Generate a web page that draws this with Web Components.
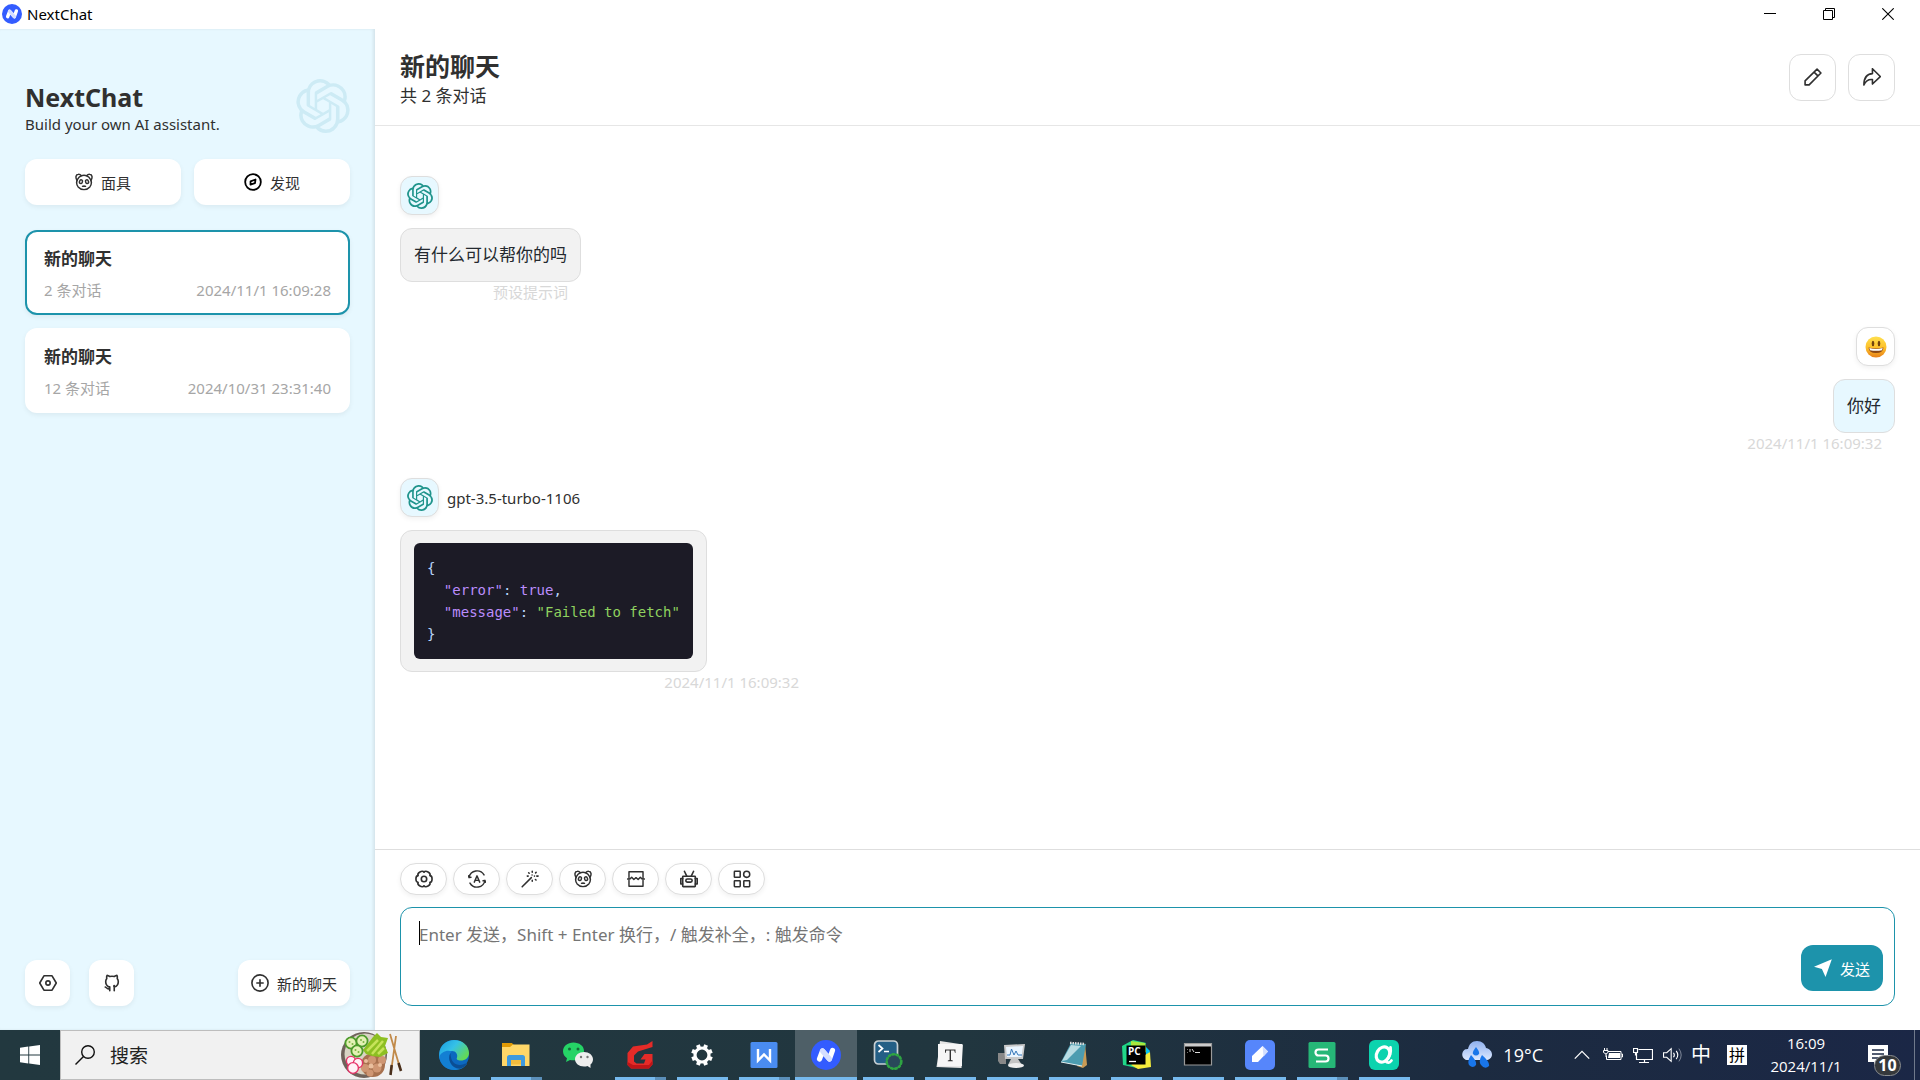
<!DOCTYPE html>
<html lang="zh-CN">
<head>
<meta charset="utf-8">
<title>NextChat</title>
<style>
  html, body {
    margin: 0;
    height: 100%;
  }
  body {
    --primary: #1d93ab;
    --second: #e7f8ff;
    --black: #303030;
    --line: #dedede;
    --card-shadow: 0 2px 5px rgba(0, 0, 0, .06);
    display: flex;
    flex-direction: column;
    overflow: hidden;
    background: #fff;
    color: var(--black);
    font-family: "Noto Sans", "Noto Sans CJK SC", sans-serif;
    font-size: 15px;
  }
</style>
</head>
<body>
<title-bar>NextChat</title-bar>
<chat-app></chat-app>
<task-bar></task-bar>

<script>
const OPENAI = 'M22.2819 9.8211a5.9847 5.9847 0 0 0-.5157-4.9108 6.0462 6.0462 0 0 0-6.5098-2.9A6.0651 6.0651 0 0 0 4.9807 4.1818a5.9847 5.9847 0 0 0-3.9977 2.9 6.0462 6.0462 0 0 0 .7427 7.0966 5.98 5.98 0 0 0 .511 4.9107 6.051 6.051 0 0 0 6.5146 2.9001A5.9847 5.9847 0 0 0 13.2599 24a6.0557 6.0557 0 0 0 5.7718-4.2058 5.9894 5.9894 0 0 0 3.9977-2.9001 6.0557 6.0557 0 0 0-.7475-7.0729zm-9.022 12.6081a4.4755 4.4755 0 0 1-2.8764-1.0408l.1419-.0804 4.7783-2.7582a.7948.7948 0 0 0 .3927-.6813v-6.7369l2.02 1.1686a.071.071 0 0 1 .038.052v5.5826a4.504 4.504 0 0 1-4.4945 4.4944zm-9.6607-4.1254a4.4708 4.4708 0 0 1-.5346-3.0137l.142.0852 4.783 2.7582a.7712.7712 0 0 0 .7806 0l5.8428-3.3685v2.3324a.0804.0804 0 0 1-.0332.0615L9.74 19.9502a4.4992 4.4992 0 0 1-6.1408-1.6464zM2.3408 7.8956a4.485 4.485 0 0 1 2.3655-1.9728V11.6a.7664.7664 0 0 0 .3879.6765l5.8144 3.3543-2.0201 1.1685a.0757.0757 0 0 1-.071 0l-4.8303-2.7865A4.504 4.504 0 0 1 2.3408 7.872zm16.5963 3.8558L13.1038 8.364 15.1192 7.2a.0757.0757 0 0 1 .071 0l4.8303 2.7913a4.4944 4.4944 0 0 1-.6765 8.1042v-5.6772a.79.79 0 0 0-.407-.667zm2.0107-3.0231l-.142-.0852-4.7735-2.7818a.7759.7759 0 0 0-.7854 0L9.409 9.2297V6.8974a.0662.0662 0 0 1 .0284-.0615l4.8303-2.7866a4.4992 4.4992 0 0 1 6.6802 4.66zM8.3065 12.863l-2.02-1.1638a.0804.0804 0 0 1-.038-.0567V6.0742a4.4992 4.4992 0 0 1 7.3757-3.4537l-.142.0805L8.704 5.459a.7948.7948 0 0 0-.3927.6813zm1.0976-2.3654l2.602-1.4998 2.6069 1.4998v2.9994l-2.5974 1.4997-2.6067-1.4997Z';

// [viewBox, markup]; line icons draw with currentColor
const line = (body, width = 1.6) =>
  `<g fill="none" stroke="currentColor" stroke-width="${width}" stroke-linecap="round" stroke-linejoin="round">${body}</g>`;

const ICONS = {
  openai: ['0 0 24 24', `<path fill="currentColor" d="${OPENAI}"/>`],
  next: ['0 0 30 30', `<circle cx="15" cy="15" r="15" fill="#335cff"/>
    <g fill="none" stroke-linecap="round" stroke-linejoin="round">
      <path d="M8.500 19 11.500 11 18.500 19 21.500 10.500" stroke="#fff" stroke-width="5.200"/>
      <path d="M11.500 11 18.500 19" stroke="#d5deff" stroke-width="5"/>
    </g>`],
  panda: ['0 0 20 20', line(`<path d="M4.500 4.800C7.500 1.800 12.500 1.800 15.500 4.800 18.500 8 19 12 16.500 15.500 13 19.500 7 19.500 3.500 15.500 1 12 1.500 8 4.500 4.800Z"/>
    <path d="M2.200 8C.2 5 1 1.500 3.600 1.400 5 1.300 6.300 2 7 3M17.800 8c2-3 1.200-6.500-1.400-6.600C15 1.300 13.700 2 13 3"/>
    <ellipse cx="6.600" cy="9.600" rx="1.600" ry="2.100" transform="rotate(20 6.600 9.600)"/><ellipse cx="13.400" cy="9.600" rx="1.600" ry="2.100" transform="rotate(-20 13.400 9.600)"/>
    <path d="M8.300 14.800Q10 13.800 11.700 14.800Z"/>`, 1.6)],
  compass: ['0 0 20 20', `<g color="#000">${line('<circle cx="10" cy="10" r="8.700"/><path d="M7.300 9.200 12.800 7.200 12.200 11.300 7.200 12.800Z"/>', 2)}</g>`],
  settings: ['0 0 20 20', line('<path d="M5.500 2h9L19.200 10l-4.700 8h-9L.8 10Z"/><circle cx="10" cy="10" r="2.400"/>', 1.8)],
  github: ['0 0 20 20', line('<path d="M7.500 18.500v-4C4.500 13.500 3 11.500 3 8.500 3 7 3.500 6 4.200 5 3.900 3.800 4 2.500 4.500 1.500c1.200.1 2 .6 3 1.300 1.600-.4 3.400-.4 5 0 1-.7 1.800-1.200 3-1.300.5 1 .6 2.300.3 3.500.7 1 1.200 2 1.200 3.500 0 3-1.500 5-4.500 6v4M7.500 16.500C5 17.500 4.200 15 2.500 14.500M7.500 14.200c-.7.800-.7 1.500 0 2.300M12.500 14.500q-.9-1.400 0-1.700"/>', 1.8)],
  plus: ['0 0 20 20', line('<circle cx="10" cy="10" r="9"/><path d="M10 6.500v7M6.500 10h7"/>', 1.8)],
  edit: ['0 0 20 20', line('<path d="M1.200 18.800v-4.500L14.500 1.200 18.800 5.500 5.700 18.800ZM11.200 4.600l4.200 4.200"/>', 1.8)],
  share: ['0 0 20 20', line('<path d="M10.500.8 19.200 9.500 10.500 17.800V12.800C6.500 12.300 3.200 14 1 18.800 1 10.500 4.500 6.500 10.500 6.200Z"/>', 1.8)],
  gear: ['0 0 20 20', line('<path d="M10 2.500C11.650-.4 18.150 3.350 16.500 6.250 19.800 6.250 19.800 13.750 16.500 13.750 18.150 16.650 11.650 20.400 10 17.500 8.350 20.400 1.850 16.650 3.500 13.750.2 13.750.2 6.250 3.500 6.250 1.850 3.350 8.350-.4 10 2.500Z"/><circle cx="10" cy="10" r="3"/>', 1.8)],
  auto: ['0 0 20 20', line('<path d="M1.200 8.200A9 9 0 0 1 17.800 5.500M18.800 11.800A9 9 0 0 1 2.200 14.500M.5 6.500 1.200 8.500 3.300 8M19.500 13.500 18.800 11.500 16.700 12M7 13.500 10 6.500 13 13.500M8 11.500h4"/>')],
  wand: ['0 0 20 20', line('<path d="M1.300 18.700 11.500 8.500M12.500 1.500v1M12.500 11.500v1M7 6.800h1M17.500 6.800h1.500M8.500 3l.6.600M16.200 3.200l.6-.6M16 10.500l.7.700M12.300 5.500v.1M15 6.800l-.1 0"/>', 1.7)],
  clip: ['0 0 20 20', line('<path d="M2.200 8.500V2h15.600v6.500M2.200 11.500v6.500h15.600v-6.500M.5 10h2.700l2-2 2.400 2.500 2.400-2 2.400 2 2.400-2.500 2 2h2.700"/>')],
  robot: ['0 0 20 20', line('<rect x="3" y="7" width="14" height="11.500" rx=".6"/><rect x="6.500" y="10" width="7" height="3.500" rx="1.700"/><path d="M3 9.500H.9v6h2.100M17 9.500h2.100v6h-2.100M7.500 6.800 5.300 2.200M12.500 6.800l2.200-4.600M5 1.500v.5M15 1.500V2"/>', 1.8)],
  grid: ['0 0 20 20', line('<rect x="1.500" y="1.500" width="6.500" height="6.500" rx=".6"/><circle cx="15.200" cy="4.800" r="3.400"/><rect x="1.500" y="12" width="6.500" height="6.500" rx=".6"/><rect x="12" y="12" width="6.500" height="6.500" rx=".6"/>', 1.7)],
  send: ['0 0 20 20', '<path fill="#fff" d="M19.800.2 0 8.500 8.800 11.200 12.800 20Z"/>'],
  smile: ['0 0 22 22', `<defs><linearGradient id="f" x2="0" y2="1"><stop stop-color="#ffe04d"/><stop offset=".55" stop-color="#fdbf2a"/><stop offset="1" stop-color="#e77f18"/></linearGradient></defs>
    <circle cx="11" cy="11" r="10.500" fill="url(#f)"/><ellipse cx="8" cy="7.500" rx="1.300" ry="2.800" fill="#70430f"/><ellipse cx="14" cy="7.500" rx="1.300" ry="2.800" fill="#70430f"/>
    <path d="M3.500 11.500Q11 13.500 18.500 11.500 18 17 11 17 4 17 3.500 11.500Z" fill="#8a4512"/><path d="M4.300 12.100Q11 14 17.700 12.100L17 14.200Q11 15.500 5 14.200Z" fill="#fff"/>`],
  minimize: ['0 0 12 12', '<path fill="#000" d="M0 5h12v1H0z"/>'],
  restore: ['0 0 12 12', '<path fill="none" stroke="#000" d="M.5 2.500h9v9h-9zM2.500 2.500v-2h9v9h-2"/>'],
  close: ['0 0 12 12', '<path fill="none" stroke="#000" stroke-width="1.100" d="M.3.300l11.400 11.400M11.700.300.300 11.700"/>'],
  windows: ['0 0 20 20', '<path fill="#fff" d="M0 2.800 8.300 1.600V9.500H0ZM9.200 1.500 20 0v9.500H9.200ZM0 10.400h8.300v8L0 17.300ZM9.200 10.400H20V20L9.200 18.500Z"/>'],
  search: ['0 0 20 20', '<g fill="none" stroke="#111" stroke-width="1.400"><circle cx="13" cy="7" r="6.300"/><path d="M8.500 11.500.5 19.500"/></g>'],
  salad: ['0 0 62 46', `<circle cx="23" cy="23" r="23" fill="#6f625a"/><circle cx="24" cy="22" r="20.500" fill="#d9d4c4"/>
    <circle cx="32" cy="33" r="12" fill="#a8714f"/><g fill="#cf9673"><circle cx="24" cy="36" r="4"/><circle cx="31" cy="28" r="4"/><circle cx="36" cy="36" r="4.500"/><circle cx="41" cy="28" r="4"/><circle cx="29" cy="41" r="3.500"/></g><g fill="#eabf9e"><circle cx="30" cy="34" r="2.500"/><circle cx="39" cy="33" r="2"/><circle cx="25" cy="29" r="2"/></g>
    <path d="M22 18 32 5 36 1 40 5 47 6 44 14 47 21 39 25 31 24 25 22Z" fill="#8dbf22"/><path d="M26 19 37 8M31 22l11-13M37 22l6-6" stroke="#c6e35a" stroke-width="2.500"/>
    <g stroke="#4d9a2a" stroke-width="1.800" fill="#e3f1b4"><circle cx="10" cy="11" r="5.600"/><circle cx="21" cy="9" r="5.600"/><circle cx="16" cy="19" r="5.600"/></g>
    <g fill="#7cb342"><circle cx="8.500" cy="10" r="1"/><circle cx="11.500" cy="12" r="1"/><circle cx="20" cy="8" r="1"/><circle cx="22.500" cy="10" r="1"/><circle cx="14.500" cy="18" r="1"/><circle cx="17.500" cy="20" r="1"/></g>
    <g stroke="#e63268" stroke-width="1.400" fill="#fff1f5"><circle cx="10" cy="29" r="4.600"/><circle cx="17" cy="31" r="4.600"/><circle cx="12" cy="36" r="5.400"/></g>
    <path d="M49 2 59 36M55 4 50 40" stroke="#c18a4a" stroke-width="1.800"/><path d="M57.500 31 60 39M50.700 33 49.500 43" stroke="#4a2f1c" stroke-width="2.600"/>`],
  edge: ['0 0 30 30', `<defs><linearGradient id="a" x2="1" y2=".6"><stop stop-color="#199ae0"/><stop offset=".5" stop-color="#35c1e8"/><stop offset="1" stop-color="#63d957"/></linearGradient></defs>
    <circle cx="15" cy="15" r="15" fill="#0c68bf"/><path d="M.3 13C1 5 8 0 15 0c9 0 15 6 15 13 0 5-4 7.500-8 7.500-3.500 0-5-1-4-3 1-3-1-6.500-5-6.500C7 11 1.500 13 .3 19Z" fill="url(#a)"/>
    <path d="M13 11.500C9 14 9 22 14 25c4 3 9 1.500 12.500-1.500 1-.7 1.500 0 1 1A15 15 0 0 1 15 30C7 30 1 24 .2 17 2 12 8 9.500 13 11.500Z" fill="#137fd3"/><path d="M11.500 13C8 19 12 29 21 28.700 24.500 27.500 26.500 26 27.500 24.500c.8-1.200 0-1.500-1-1-6 3-15 2-15-10.500Z" fill="#0b4e94"/>`],
  folder: ['0 0 30 30', '<path d="M1 3h10l2 2.500V9H1z" fill="#e09a05"/><path d="M1 7h8l3-2.500h16.500V26H1z" fill="#ffd768"/><path d="M6 26V17.500Q6 15 8.500 15h13Q24 15 24 17.500V26h-4v-6H10v6Z" fill="#3e9adf"/><path d="M10 20h10v4.500H10z" fill="#f3bd3d"/>'],
  wechat: ['0 0 30 30', '<path d="M10.500 2.500C4.500 2.500 0 6.300 0 11.200c0 3 1.500 5.300 4 7L3 22l4-2c5 1 14 .5 14-9 0-5-4.700-8.500-10.500-8.500Z" fill="#25d366"/><path d="M21 12c-5 0-9 3.200-9 7.300s4 7.200 9 7.200q2 0 3.500-.6L27.500 28v-3.500c1.600-1.300 2.500-3.100 2.500-5.200C30 15.200 26 12 21 12Z" fill="#eee"/><g fill="#17693a"><circle cx="6.500" cy="9" r="1.500"/><circle cx="15" cy="9" r="1.500"/></g><g fill="#777"><circle cx="18" cy="17" r="1.200"/><circle cx="24.500" cy="17" r="1.200"/></g>'],
  gtool: ['0 0 30 30', '<path d="M27.500 1v6L13 11.500 9 15.500v6l2.500 2h7.500l1.500-4h-5l4-5.500H27.500v10.500L24 28.500H6L2.500 25V13L8 6.500 22 4.500Z" fill="#e52b28"/><path d="M2.500 22v3L6 28.500h18l3.500-4v-4L24 25H8Z" fill="#bf1518"/>'],
  cog: ['0 0 30 30', '<g fill="none" stroke="#fff"><circle cx="15" cy="15" r="7" stroke-width="3.200"/><path d="M15 7.500V4.200M15 22.500v3.300M7.500 15H4.200M22.500 15h3.300M9.700 9.700 7.400 7.400M20.300 20.300l2.300 2.300M9.700 20.300l-2.300 2.300M20.300 9.700l2.300-2.300" stroke-width="4" transform="rotate(22.500 15 15)"/></g>'],
  wps: ['0 0 30 30', '<rect x="1.500" y="2" width="27" height="26" rx="1.500" fill="#4a8cf0"/><path d="M9 9v11.500l6-6 6 6V9" fill="none" stroke="#fff" stroke-width="2.400"/>'],
  shell: ['0 0 30 30', '<rect x="1.500" y="1" width="23" height="23" rx="4" fill="#245f86" stroke="#c8d0d4" stroke-width="1.700"/><path d="m5.500 5 4 3.500L5.500 12M11 11.500h5" fill="none" stroke="#fff" stroke-width="1.700"/><circle cx="21" cy="21.500" r="7.300" fill="#29485a" stroke="#2fa443" stroke-width="2.600" stroke-dasharray="3 1"/><circle cx="21" cy="21.500" r="7.300" fill="none" stroke="#2fa443" stroke-width="1.500"/>'],
  typora: ['0 0 30 30', '<path d="M5 1 28 4.500 26.500 28 1.500 27 4 10Z" fill="#e5e5e5"/><path d="M3 4h24v22H3z" fill="#f6f6f6"/><path d="M10 9.500h10.500v3.500h-.5l-.8-2.500H16V20l1.800.5v.7h-5v-.7l1.800-.5v-9.500h-3.300L10.500 13H10z" fill="#333"/>'],
  monitor: ['0 0 30 30', '<path d="M1 13h8v11H3L1 21Z" fill="#888"/><path d="M7 5 28 4 26 19H8Z" fill="#c9c9c9"/><path d="m9 7 17-1-1.500 11H10Z" fill="#eaf5ff"/><path d="M10 15h3l1.500-6L17 15l2-4 2 4h4" fill="none" stroke="#3577b8"/><path d="M14 19h7l4 6H11Z" fill="#c4c4c4"/><ellipse cx="19" cy="25.500" rx="8" ry="2.500" fill="#eee"/>'],
  notepad: ['0 0 30 30', '<path d="M26 3 28 25l-4 3-6-2Z" fill="#c99b55"/><path d="M12 3 27 4 23 26 2 22Z" fill="#4c9cb0"/><path d="M12 5 22 6 8 20l-5 1Z" fill="#b9dce3"/><path d="m11 3 15 1" stroke="#ddd" stroke-width="2.500" stroke-dasharray="1.500 1"/><path d="M2 22 23 26" stroke="#e4eff1"/>'],
  pycharm: ['0 0 30 30', '<path d="m1 6 11-6 13 3-9 25-14-3Z" fill="#21d789"/><path d="m10 1 14 2 2 9-16 3Z" fill="#a9e83d"/><path d="m25 7 4 4-4 10Z" fill="#07c3f2"/><path d="m24 15 5-3 1 15-13 2-7-4Z" fill="#f5ec3c"/><path d="M5.500 5.500h19v19h-19z"/><path d="M8 21.500h7" stroke="#fff" stroke-width="1.300"/><text x="7" y="15" fill="#fff" font-family="Open Sans" font-weight="700" font-size="10">PC</text>'],
  cmd: ['0 0 30 30', '<path d="M1.500 3.500h27v21.500h-27z" fill="#000" stroke="#9a9a9a" stroke-width="1.200"/><path d="M2 4h26v2.500H2z" fill="#ccc"/><path d="M4.500 9.500v.5M4.500 12v.5M7 9v3M9 9l2 3M12 12.500h5" stroke="#ddd" fill="none"/>'],
  pen: ['0 0 30 30', '<rect width="30" height="30" rx="5" fill="#5686fb"/><path d="m7 16 10.500-10L23 11.500 13 22H7Z" fill="#fff"/><path d="m17.500 6 5.500 5.500-4.500 5Z" fill="#d3dfff"/>'],
  sheet: ['0 0 30 30', '<rect x="1.500" y="2" width="27" height="26" rx="1.500" fill="#26b777"/><path d="M21 9.500h-9.500a3 3 0 0 0 0 6h7a3 3 0 0 1 0 6H9" fill="none" stroke="#fff" stroke-width="2.200"/>'],
  quill: ['0 0 30 30', '<rect width="30" height="30" rx="6" fill="#0cd3ae"/><g fill="none" stroke="#fff" stroke-linecap="round"><ellipse cx="14" cy="14.500" rx="6.300" ry="8" stroke-width="3.200" transform="rotate(30 14 14.500)"/><path d="M21.500 7.500C22.500 13 20 18 16.500 21q3 3.500 6-.5" stroke-width="2.800"/></g>'],
  rain: ['0 0 30 28', '<defs><linearGradient id="c" x2="0" y2="1"><stop stop-color="#8fb0ee"/><stop offset="1" stop-color="#dbe8ff"/></linearGradient></defs><path d="M6 19C1 19-1 14 1 10.500 2.500 8 5 8 6 8 7 3 10 0 15 0s8 3 9 7c3 .5 6 3 6 6.500S27 19 24 19Z" fill="url(#c)"/><g fill="#1976ea"><path d="M14 6q-4 5-3 7 3 3 6 0 1-2-3-7ZM9 14q-4 6-2 10 4 4 7 0 1-4-5-10ZM20 14q-4 6-1 10 4 5 8 1 1-4-7-11Z"/></g>'],
  chevron: ['0 0 20 20', '<path d="m2 14 8-8 8 8" fill="none" stroke="#fff" stroke-width="1.400"/>'],
  battery: ['0 0 20 20', '<path d="M5 6.500h13v8H3.500v-4M18.500 9h1v3h-1" fill="none" stroke="#fff"/><path d="M6 8h11v5H5z" fill="#fff"/><path d="M1.500 3v3M4 3v3M.5 5.500h4.500v2L3 9v3M.5 5.500v2L3 9" fill="none" stroke="#fff"/>'],
  network: ['0 0 20 20', '<path d="M5.500 4.500h14v10h-16v-7M.5 3.500h4v4h-4zM2.500 7.500v3M11.500 14.500v3M6 17.500h10" fill="none" stroke="#fff" stroke-width="1.200"/>'],
  sound: ['0 0 22 20', '<path d="M.6 7.500h3.500L9 3v14l-4.900-4.500H.6Z" fill="none" stroke="#fff" stroke-width="1.200"/><path d="M11.500 7.500q2 2.500 0 5M14.500 5.500q3.500 4.500 0 9" fill="none" stroke="#fff" stroke-width="1.200"/><path d="M17.500 3q5 7 0 14" fill="none" stroke="#8b93a3"/>'],
  notice: ['0 0 20 20', '<path fill="#fff" d="M0 0h20v17H9l-3 3v-3H0Z"/><path d="M4 5h12M4 9h12M4 13h8" stroke="#1b2844" stroke-width="1.300"/>']
};

class UiIcon extends HTMLElement {
  constructor() {
    super();
    this.attachShadow({ mode: 'open' });
  }

  connectedCallback() {
    const [box, body] = ICONS[this.getAttribute('name')];
    this.shadowRoot.innerHTML = `
      <style>
        :host { display: inline-flex; flex: none; width: 20px; height: 20px; }
        svg { width: 100%; height: 100%; }
      </style>
      <svg viewBox="${box}" aria-hidden="true">${body}</svg>
    `;
  }
}
customElements.define('ui-icon', UiIcon);

class TitleBar extends HTMLElement {
  constructor() {
    super();
    this.attachShadow({ mode: 'open' }).innerHTML = `
      <style>
        :host { display: flex; flex: none; align-items: center; box-sizing: border-box; height: 29px; padding: 0 3px 1px 2px; color: #000; }
        .logo { width: 20px; height: 20px; margin-right: 5px; }
        .name { flex: 1; line-height: 20px; }
        button { display: flex; align-items: center; justify-content: center; width: 59px; height: 28px; padding: 0; border: 0; background: none; }
        button ui-icon { width: 12px; height: 12px; }
      </style>
      <ui-icon class="logo" name="next"></ui-icon>
      <span class="name"><slot></slot></span>
      <button aria-label="最小化"><ui-icon name="minimize"></ui-icon></button>
      <button aria-label="还原"><ui-icon name="restore"></ui-icon></button>
      <button aria-label="关闭"><ui-icon name="close"></ui-icon></button>
    `;
  }
}
customElements.define('title-bar', TitleBar);

// variants: card (default), bordered, chip, primary
class IconButton extends HTMLElement {
  constructor() {
    super();
    this.attachShadow({ mode: 'open' });
  }

  connectedCallback() {
    const label = this.getAttribute('label');
    this.shadowRoot.innerHTML = `
      <style>
        :host { display: block; }
        button {
          display: flex;
          align-items: center;
          justify-content: center;
          gap: 8px;
          box-sizing: border-box;
          width: 100%;
          min-width: 45px;
          height: 46px;
          padding: 0 13px;
          border: 0;
          border-radius: 12px;
          background: #fff;
          color: inherit;
          font: inherit;
          white-space: nowrap;
          cursor: pointer;
          box-shadow: var(--card-shadow);
        }
        ui-icon { width: 18px; height: 18px; }
        :host([variant="bordered"]) button { width: 47px; height: 47px; border: 1px solid var(--line); box-shadow: none; }
        :host([variant="chip"]) button { width: 47px; height: 32px; border: 1px solid var(--line); border-radius: 16px; }
        :host([variant="primary"]) button { background: var(--primary); color: #fff; box-shadow: none; }
      </style>
      <button ${label ? `aria-label="${label}"` : ''}>
        <ui-icon name="${this.getAttribute('icon')}"></ui-icon>
        ${label ? '' : '<span><slot></slot></span>'}
      </button>
    `;
  }
}
customElements.define('icon-button', IconButton);

class ChatItem extends HTMLElement {
  constructor() {
    super();
    this.attachShadow({ mode: 'open' }).innerHTML = `
      <style>
        :host {
          display: block;
          box-sizing: border-box;
          height: 85px;
          padding: 15px 17px 13px;
          border: 2px solid transparent;
          border-radius: 12px;
          background: #fff;
          background-clip: border-box;
          box-shadow: var(--card-shadow);
        }
        :host([selected]) { border-color: var(--primary); }
        .title { font-size: 17px; font-weight: 700; line-height: 24px; }
        .info { display: flex; justify-content: space-between; margin-top: 9px; color: #a6a6a6; line-height: 20px; }
      </style>
      <div class="title"><slot></slot></div>
      <div class="info"><slot name="count"></slot><slot name="date"></slot></div>
    `;
  }
}
customElements.define('chat-item', ChatItem);

class SideBar extends HTMLElement {
  constructor() {
    super();
    this.attachShadow({ mode: 'open' }).innerHTML = `
      <style>
        :host {
          display: flex;
          flex: none;
          flex-direction: column;
          box-sizing: border-box;
          width: 375px;
          padding: 50px 25px 24px;
          background: var(--second);
          box-shadow: inset -2px 0 3px rgba(0, 0, 0, .08);
        }
        header { display: flex; justify-content: space-between; height: 80px; }
        h1 { margin: 1px 0 0; font-size: 25px; line-height: 34px; }
        p { margin: 0; line-height: 20px; }
        header ui-icon { width: 54px; height: 54px; color: #cdebf5; }
        nav { display: grid; grid-template-columns: 1fr 1fr; gap: 13px; }
        .list { display: flex; flex: 1; flex-direction: column; gap: 13px; margin-top: 25px; }
        footer { display: flex; gap: 19px; }
        .new { margin-left: auto; }
      </style>
      <header>
        <div><h1>NextChat</h1><p>Build your own AI assistant.</p></div>
        <ui-icon name="openai"></ui-icon>
      </header>
      <nav>
        <icon-button icon="panda">面具</icon-button>
        <icon-button icon="compass">发现</icon-button>
      </nav>
      <div class="list">
        <chat-item selected>新的聊天<span slot="count">2 条对话</span><span slot="date">2024/11/1 16:09:28</span></chat-item>
        <chat-item>新的聊天<span slot="count">12 条对话</span><span slot="date">2024/10/31 23:31:40</span></chat-item>
      </div>
      <footer>
        <icon-button icon="settings" label="设置"></icon-button>
        <icon-button icon="github" label="GitHub"></icon-button>
        <icon-button class="new" icon="plus">新的聊天</icon-button>
      </footer>
    `;
  }
}
customElements.define('side-bar', SideBar);

class ChatMessage extends HTMLElement {
  constructor() {
    super();
    this.attachShadow({ mode: 'open' });
  }

  connectedCallback() {
    const user = this.hasAttribute('user');
    this.shadowRoot.innerHTML = `
      <style>
        :host { display: flex; flex-direction: column; align-items: flex-start; align-self: flex-start; }
        :host([user]) { align-items: flex-end; align-self: flex-end; }
        :host([wide]) { min-width: 412px; }
        .head { display: flex; align-items: center; gap: 8px; height: 39px; line-height: 18px; }
        .avatar {
          display: flex;
          align-items: center;
          justify-content: center;
          box-sizing: border-box;
          width: 39px;
          height: 39px;
          border: 1px solid var(--line);
          border-radius: 12px;
          background: var(--second);
          color: #1f948c;
          box-shadow: var(--card-shadow);
        }
        :host([user]) .avatar { background: #fff; }
        .avatar ui-icon { width: ${user ? 22 : 26}px; height: ${user ? 22 : 26}px; }
        .bubble {
          box-sizing: border-box;
          margin-top: 13px;
          padding: 12px 13px;
          border: 1px solid var(--line);
          border-radius: 12px;
          background: ${user ? 'var(--second)' : '#f2f2f2'};
          color: #24292f;
          font-size: 17px;
          line-height: 28px;
        }
        .date { align-self: flex-end; padding-right: 13px; color: #d8d8d8; line-height: 21px; }
      </style>
      <div class="head">
        <span class="avatar"><ui-icon name="${user ? 'smile' : 'openai'}"></ui-icon></span>
        <slot name="model"></slot>
      </div>
      <div class="bubble"><slot></slot></div>
      <div class="date"><slot name="date"></slot></div>
    `;
  }
}
customElements.define('chat-message', ChatMessage);

class ErrorCode extends HTMLElement {
  constructor() {
    super();
    this.attachShadow({ mode: 'open' }).innerHTML = `
      <style>
        :host { display: block; }
        pre {
          margin: 0;
          padding: 14px 13px;
          border-radius: 6px;
          background: #1c1b26;
          color: #b8d5fb;
          font: 14px/22px "DejaVu Sans Mono", monospace;
        }
        code { display: flex; font: inherit; }
        .key { color: #bb8dfc; }
        .str { color: #8fd15f; }
      </style>
      <pre><code><span>{</span></code><code><span>  </span><span class="key">"error"</span><span>: </span><span class="key">true</span><span>,</span></code><code><span>  </span><span class="key">"message"</span><span>: </span><span class="str">"Failed to fetch"</span></code><code><span>}</span></code></pre>
    `;
  }
}
customElements.define('error-code', ErrorCode);

class ChatInput extends HTMLElement {
  constructor() {
    super();
    this.attachShadow({ mode: 'open' }).innerHTML = `
      <style>
        :host { display: block; padding: 13px 25px 24px; border-top: 1px solid var(--line); }
        .actions { display: flex; gap: 6px; margin-bottom: 12px; }
        .box { position: relative; }
        textarea {
          display: block;
          box-sizing: border-box;
          width: 100%;
          height: 99px;
          padding: 14px 112px 14px 18px;
          border: 1px solid var(--primary);
          border-radius: 12px;
          outline: 0;
          background: #fff;
          color: inherit;
          font: 17px/26px "Noto Sans", "Noto Sans CJK SC", sans-serif;
          resize: none;
        }
        textarea::placeholder { color: #757575; }
        .caret { position: absolute; left: 19px; top: 14px; width: 1px; height: 24px; background: #000; }
        .send { position: absolute; right: 12px; bottom: 15px; }
      </style>
      <div class="actions">
        <icon-button variant="chip" icon="gear" label="对话设置"></icon-button>
        <icon-button variant="chip" icon="auto" label="自动主题"></icon-button>
        <icon-button variant="chip" icon="wand" label="快捷指令"></icon-button>
        <icon-button variant="chip" icon="panda" label="所有面具"></icon-button>
        <icon-button variant="chip" icon="clip" label="清除聊天"></icon-button>
        <icon-button variant="chip" icon="robot" label="模型"></icon-button>
        <icon-button variant="chip" icon="grid" label="插件"></icon-button>
      </div>
      <div class="box">
        <textarea aria-label="消息" placeholder="Enter 发送，Shift + Enter 换行，/ 触发补全，: 触发命令"></textarea>
        <span class="caret"></span>
        <icon-button class="send" variant="primary" icon="send">发送</icon-button>
      </div>
    `;
  }
}
customElements.define('chat-input', ChatInput);

class ChatApp extends HTMLElement {
  constructor() {
    super();
    this.attachShadow({ mode: 'open' }).innerHTML = `
      <style>
        :host { display: flex; flex: 1; min-height: 0; }
        main { display: flex; flex: 1; flex-direction: column; min-width: 0; }
        header { display: flex; align-items: center; gap: 12px; box-sizing: border-box; height: 97px; padding: 0 25px; border-bottom: 1px solid #e6e6e6; }
        .title { flex: 1; padding-top: 3px; }
        h2 { margin: 0; font-size: 25px; line-height: 34px; }
        p { margin: 0; font-size: 17px; line-height: 26px; }
        .messages { display: flex; flex: 1; flex-direction: column; gap: 24px; min-height: 0; padding: 50px 25px 0; overflow: hidden; }
      </style>
      <side-bar></side-bar>
      <main>
        <header>
          <div class="title"><h2>新的聊天</h2><p>共 2 条对话</p></div>
          <icon-button variant="bordered" icon="edit" label="编辑"></icon-button>
          <icon-button variant="bordered" icon="share" label="分享"></icon-button>
        </header>
        <div class="messages">
          <chat-message>有什么可以帮你的吗<span slot="date">预设提示词</span></chat-message>
          <chat-message user>你好<span slot="date">2024/11/1 16:09:32</span></chat-message>
          <chat-message wide>
            <span slot="model">gpt-3.5-turbo-1106</span>
            <error-code></error-code>
            <span slot="date">2024/11/1 16:09:32</span>
          </chat-message>
        </div>
        <chat-input></chat-input>
      </main>
    `;
  }
}
customElements.define('chat-app', ChatApp);

// name, label, state: '' not running, 'run' one window, 'multi' several, 'active' focused
const APPS = [
  ['edge', 'Edge', 'run'], ['folder', '资源管理器', 'multi'], ['wechat', '微信', ''], ['gtool', 'G', 'multi'],
  ['cog', '设置', 'run'], ['wps', 'WPS', 'multi'], ['next', 'NextChat', 'active'], ['shell', '终端', 'run'],
  ['typora', 'Typora', 'run'], ['monitor', '性能监视器', 'run'], ['notepad', '记事本', 'run'], ['pycharm', 'PyCharm', 'run'],
  ['cmd', '命令提示符', 'run'], ['pen', '笔记', 'run'], ['sheet', '表格', 'multi'], ['quill', '写作', 'run']
];

class TaskBar extends HTMLElement {
  constructor() {
    super();
    this.attachShadow({ mode: 'open' }).innerHTML = `
      <style>
        :host {
          display: flex;
          flex: none;
          height: 50px;
          background: linear-gradient(90deg, #22383f, #21363f 50%, #1c2b40 76%, #1b2746);
          color: #fff;
          font-family: "Open Sans", "Noto Sans CJK SC", sans-serif;
        }
        button { display: flex; align-items: center; justify-content: center; padding: 0; border: 0; background: none; }
        .start { width: 60px; }
        .search { display: flex; align-items: center; box-sizing: border-box; width: 360px; padding: 0 14px; border: 1px solid #bdbdbd; background: #f1f1f1; }
        input { flex: 1; min-width: 0; margin-left: 15px; padding: 0; border: 0; outline: 0; background: none; font: 19px/26px "Noto Sans CJK SC", sans-serif; }
        input::placeholder { color: #222; }
        .salad { width: 62px; height: 46px; margin-right: 2px; }
        .apps { display: flex; margin-left: 3px; }
        .apps button { position: relative; width: 62px; }
        .apps ui-icon { width: 30px; height: 30px; }
        .apps button::after { content: ""; position: absolute; inset: auto 5px 0 6px; height: 3px; background: #76b9ed; }
        .apps .idle::after { display: none; }
        .apps .multi::after { background: linear-gradient(90deg, #76b9ed 40px, #5b8fb9 40px); }
        .apps .active { background: #4e5f67; }
        .apps .active::after { inset: auto 0 0; }
        .tray { display: flex; align-items: center; margin-left: auto; }
        .rain { width: 30px; height: 28px; }
        .temp { margin: 0 30px 0 11px; font-size: 18px; line-height: 26px; }
        .icons { display: flex; gap: 10px; align-items: center; }
        .chevron { width: 18px; height: 18px; margin-right: 2px; }
        .ime { margin-left: 8px; font-size: 20px; line-height: 26px; }
        .pin { margin-left: 16px; width: 20px; height: 20px; background: #fff; color: #000; font-size: 16px; line-height: 20px; text-align: center; }
        .clock { width: 76px; margin: 0 24px 0 21px; line-height: 23px; text-align: center; }
        .notice { position: relative; width: 20px; margin-right: 26px; }
        .badge {
          position: absolute; left: 6px; top: 10px; box-sizing: border-box; width: 27px; height: 21px;
          border: 1px solid #8a8d90; border-radius: 11px; background: #35383b; font: 700 16px/19px "Open Sans", sans-serif;
          color: #fff; text-align: center;
        }
        .desk { align-self: stretch; width: 5px; border-left: 1px solid #70798b; }
      </style>
      <button class="start" aria-label="开始"><ui-icon name="windows"></ui-icon></button>
      <label class="search">
        <ui-icon name="search"></ui-icon>
        <input type="text" placeholder="搜索" aria-label="搜索">
        <ui-icon class="salad" name="salad"></ui-icon>
      </label>
      <div class="apps">
        ${APPS.map(([name, label, state]) => `<button class="${state || 'idle'}" aria-label="${label}"><ui-icon name="${name}"></ui-icon></button>`).join('')}
      </div>
      <div class="tray">
        <ui-icon class="rain" name="rain"></ui-icon>
        <span class="temp">19°C</span>
        <div class="icons">
          <ui-icon class="chevron" name="chevron"></ui-icon>
          <ui-icon name="battery"></ui-icon>
          <ui-icon name="network"></ui-icon>
          <ui-icon name="sound"></ui-icon>
        </div>
        <span class="ime">中</span>
        <span class="pin">拼</span>
        <div class="clock">16:09<br>2024/11/1</div>
        <button class="notice" aria-label="通知"><ui-icon name="notice"></ui-icon><span class="badge">10</span></button>
        <span class="desk"></span>
      </div>
    `;
  }
}
customElements.define('task-bar', TaskBar);
</script>
</body>
</html>
